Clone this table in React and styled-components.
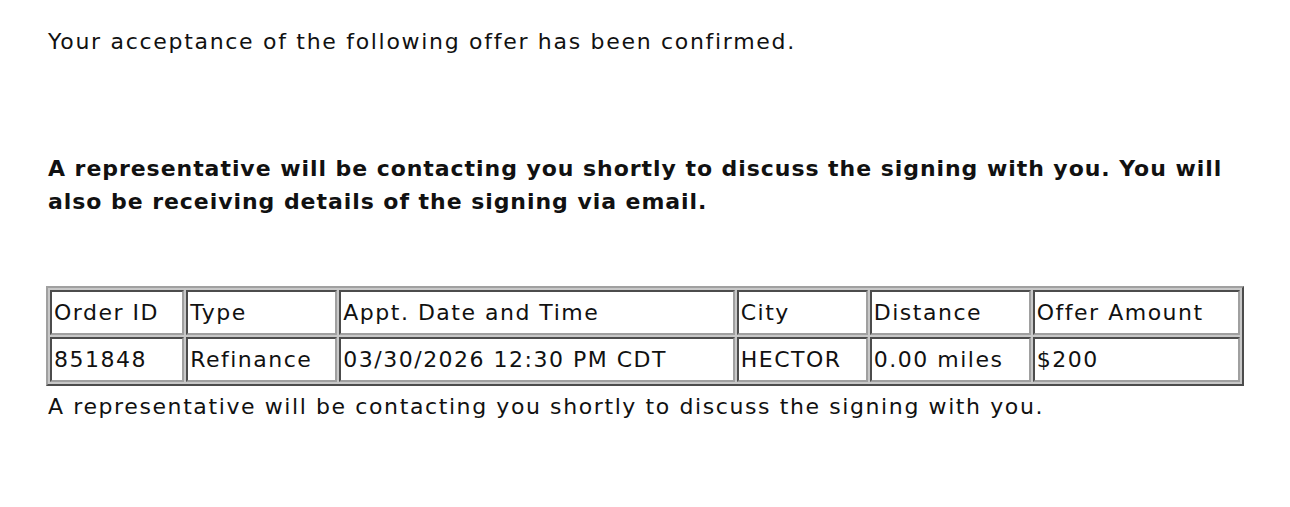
import React from 'react';
import styled, { createGlobalStyle } from 'styled-components';

const GlobalStyle = createGlobalStyle`
  html, body {
    margin: 0;
    padding: 0;
    background: #ffffff;
  }
  body {
    font-family: "DejaVu Sans", Verdana, sans-serif;
    color: #111;
  }
`

const Page = styled.div`
  padding: 28px 46px 0 48px;
  width: 1290px;
  box-sizing: border-box;
`

const Notice = styled.p`
  margin: 0;
  font-size: 22px;
  line-height: 28px;
  letter-spacing: 1.7px;
`

const Strong = styled.p`
  margin: 96px 0 0 0;
  font-size: 22px;
  line-height: 33px;
  font-weight: bold;
  letter-spacing: 0.95px;
`

const Table = styled.table`
  margin: 68px 0 0 -2px;
  width: 1198px;
  border: 2px outset #a0a0a0;
  border-spacing: 2px;
  background: #c8c8c8;
`

const Cell = styled.td`
  border: 2px inset #a0a0a0;
  background: #fff;
  font-size: 22px;
  line-height: 26px;
  letter-spacing: 1.5px;
  padding: 8px 2px 7px 2px;
  text-align: left;
  white-space: nowrap;
`

const Footer = styled.p`
  margin: 7px 0 0 0;
  font-size: 22px;
  line-height: 28px;
  letter-spacing: 1.6px;
`

const columns = [
  { head: 'Order ID', value: '851848', width: 136 },
  { head: 'Type', value: 'Refinance', width: 153 },
  { head: 'Appt. Date and Time', value: '03/30/2026 12:30 PM CDT', width: 401 },
  { head: 'City', value: 'HECTOR', width: 133 },
  { head: 'Distance', value: '0.00 miles', width: 163 },
  { head: 'Offer Amount', value: '$200', width: 210 },
];

export default function App() {
  return (
    <>
      <GlobalStyle />
      <Page>
        <Notice>Your acceptance of the following offer has been confirmed.</Notice>
        <Strong>
          A representative will be contacting you shortly to discuss the signing with you. You will
          also be receiving details of the signing via email.
        </Strong>
        <Table>
          <tbody>
            <tr>
              {columns.map(c => (
                <Cell key={c.head} style={{ width: c.width - 8 }}>{c.head}</Cell>
              ))}
            </tr>
            <tr>
              {columns.map(c => (
                <Cell key={c.head}>{c.value}</Cell>
              ))}
            </tr>
          </tbody>
        </Table>
        <Footer>A representative will be contacting you shortly to discuss the signing with you.</Footer>
      </Page>
    </>
  );
}
